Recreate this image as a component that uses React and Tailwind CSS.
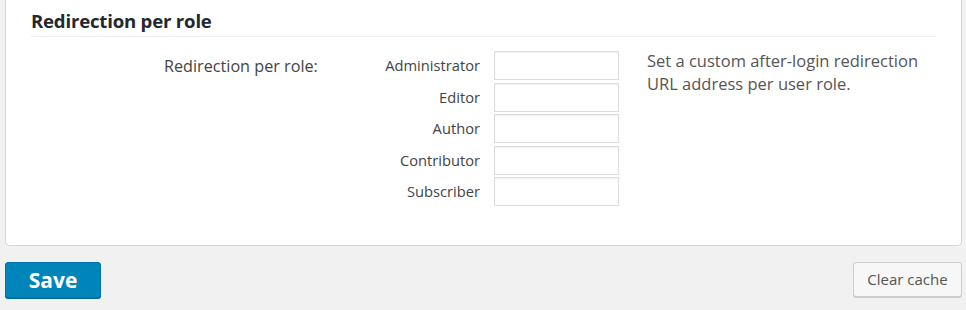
import React from "react";

const roles = ["Administrator", "Editor", "Author", "Contributor", "Subscriber"];

export default function App() {
  return (
    <div
      className="w-[966px] h-[310px] bg-[#f1f1f1] overflow-hidden"
      style={{ fontFamily: '"Open Sans", "Noto Sans", sans-serif' }}
    >
      <div className="ml-[5px] mr-[4px] h-[246px] bg-white border border-t-0 border-[#d5d5d5] rounded-b-[5px] pl-[25px] pr-[25px]">
        <div className="pt-[8px] h-[36px] text-[18.6px] font-bold text-[#23282d] leading-[26px] tracking-[-0.2px]">
          Redirection per role
        </div>
        <div className="h-px bg-[#eeeeee]" />
        <div className="flex pt-[14px]">
          <div className="w-[333px] shrink-0 pl-[133px] pt-[4px] text-[16.2px] leading-[22px] text-[#444]">
            Redirection per role:
          </div>
          <div className="flex flex-col gap-[2.5px] shrink-0">
            {roles.map((r) => (
              <div key={r} className="flex items-center h-[29px]">
                <div className="w-[130px] text-right text-[14.7px] text-[#444] pr-[14px]">{r}</div>
                <input
                  type="text"
                  className="w-[125px] h-[29px] border border-[#dddddd] bg-white shadow-[inset_0_1px_2px_rgba(0,0,0,0.07)] outline-none"
                />
              </div>
            ))}
          </div>
          <div className="pl-[28px] text-[16.5px] leading-[23px] text-[#555] w-[310px] shrink-0 -mt-[2px]">
            Set a custom after-login redirection URL address per user role.
          </div>
        </div>
      </div>
      <div className="flex justify-between items-start mt-[16px] pl-[5px] pr-[4px]">
        <button className="w-[96px] h-[36px] bg-[#0085ba] border border-[#0073aa] rounded-[3px] shadow-[0_1px_0_#006799] text-white text-[21px] font-bold leading-[34px] pb-[2px]">
          Save
        </button>
        <button className="w-[109px] h-[35px] bg-[#f7f7f7] border border-[#cccccc] rounded-[3px] shadow-[0_1px_0_#cccccc] text-[#555] text-[15px] leading-[33px]">
          Clear cache
        </button>
      </div>
    </div>
  );
}
